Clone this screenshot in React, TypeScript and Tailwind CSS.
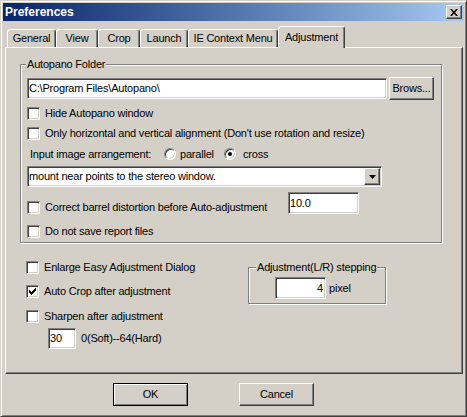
import React from "react";

const sunken =
  "border border-t-[#808080] border-l-[#808080] border-b-white border-r-white shadow-[inset_1px_1px_0_#404040,inset_-1px_-1px_0_#d4d0c8]";
const raised =
  "border border-t-white border-l-white border-b-[#404040] border-r-[#404040] shadow-[inset_-1px_-1px_0_#808080]";
const etched =
  "border border-[#808080] shadow-[1px_1px_0_#fff,inset_1px_1px_0_#fff]";

function Check({ checked }: { checked?: boolean }) {
  return (
    <div className={`w-[13px] h-[13px] bg-white shrink-0 flex items-center justify-center ${sunken}`}>
      {checked && (
        <svg width="7" height="7" viewBox="0 0 7 7" shapeRendering="crispEdges">
          <path
            d="M0 2h1v3H0z M1 3h1v3H1z M2 4h1v3H2z M3 3h1v3H3z M4 2h1v3H4z M5 1h1v3H5z M6 0h1v3H6z"
            fill="#000"
          />
        </svg>
      )}
    </div>
  );
}

function CheckRow({
  label,
  checked,
  className = "",
}: {
  label: string;
  checked?: boolean;
  className?: string;
}) {
  return (
    <div className={`flex items-center h-[20px] ${className}`}>
      <Check checked={checked} />
      <span className="ml-[5px] whitespace-nowrap">{label}</span>
    </div>
  );
}

function Radio({ checked }: { checked?: boolean }) {
  return (
    <div className="w-[12px] h-[12px] rounded-full bg-white border border-t-[#808080] border-l-[#808080] border-b-white border-r-white shadow-[inset_1px_1px_0_#404040,inset_-1px_-1px_0_#d4d0c8] flex items-center justify-center shrink-0">
      {checked && <div className="w-[4px] h-[4px] rounded-full bg-black" />}
    </div>
  );
}

function Tab({ label, className }: { label: string; className: string }) {
  return (
    <div
      className={`h-[18px] border-t border-l border-r border-t-white border-l-white border-r-[#404040] rounded-t-[3px] shadow-[inset_-1px_0_0_#808080] flex items-center justify-center whitespace-nowrap ${className}`}
    >
      {label}
    </div>
  );
}

export default function App() {
  return (
    <div className="w-[467px] h-[417px] bg-[#d4d0c8] border border-t-[#d4d0c8] border-l-[#d4d0c8] border-b-[#404040] border-r-[#404040] shadow-[inset_1px_1px_0_#fff,inset_-1px_-1px_0_#808080] p-[2px] flex flex-col text-[11px] leading-[13px] tracking-[-0.2px] text-black font-['Liberation_Sans',Arial,sans-serif] select-none">
      {/* Title bar */}
      <div className="h-[18px] shrink-0 flex items-center bg-linear-to-r from-[#0a246a] to-[#a6caf0] pl-[2px] pr-[2px]">
        <span className="flex-1 text-white font-bold text-[12px] tracking-normal">Preferences</span>
        <div className={`w-[16px] h-[14px] bg-[#d4d0c8] flex items-center justify-center ${raised}`}>
          <svg width="8" height="7" viewBox="0 0 8 7">
            <path d="M0 0h2l2 2.5L6 0h2L5 3.5 8 7H6L4 4.5 2 7H0l3-3.5z" fill="#000" />
          </svg>
        </div>
      </div>

      {/* Tabs */}
      <div className="flex items-end h-[21px] mt-[5px] pl-[4px] shrink-0">
        <Tab label="General" className="w-[49px]" />
        <Tab label="View" className="w-[42px]" />
        <Tab label="Crop" className="w-[42px]" />
        <Tab label="Launch" className="w-[48px]" />
        <Tab label="IE Context Menu" className="w-[90px]" />
        <div className="relative z-10 w-[67px] h-[22px] -mb-[1px] bg-[#d4d0c8] border-t border-l border-r border-t-white border-l-white border-r-[#404040] rounded-t-[3px] shadow-[inset_-1px_0_0_#808080] flex justify-center pt-[4px] whitespace-nowrap">
          Adjustment
        </div>
      </div>

      {/* Panel */}
      <div className="ml-[2px] mr-[1px] h-[327px] shrink-0 border border-t-white border-l-white border-r-[#404040] border-b-[#404040] shadow-[inset_-1px_-1px_0_#808080] pl-[14px] pt-[16px] flex flex-col">
        {/* Autopano Folder group */}
        <div className={`relative w-[422px] h-[179px] pl-[6px] flex flex-col ${etched}`}>
          <span className="absolute -top-[7px] left-[5px] px-[1px] bg-[#d4d0c8] whitespace-nowrap">
            Autopano Folder
          </span>
          <div className="flex items-center h-[23px] mt-[12px]">
            <div className={`w-[360px] h-[21px] bg-white flex items-center pl-[1px] whitespace-nowrap ${sunken}`}>
              C:\Program Files\Autopano\
            </div>
            <div className={`ml-[2px] w-[45px] h-[23px] bg-[#d4d0c8] flex items-center justify-center whitespace-nowrap overflow-hidden ${raised}`}>
              Brows...
            </div>
          </div>
          <CheckRow className="mt-[3px]" label="Hide Autopano window" />
          <CheckRow label="Only horizontal and vertical alignment (Don't use rotation and resize)" />
          <div className="flex items-center h-[20px] mt-[1px]">
            <span className="ml-[3px] w-[134px] whitespace-nowrap">Input image arrangement:</span>
            <Radio />
            <span className="ml-[4px] w-[44px] whitespace-nowrap">parallel</span>
            <Radio checked />
            <span className="ml-[7px] whitespace-nowrap">cross</span>
          </div>
          <div className={`mt-[2px] w-[355px] h-[21px] bg-white flex items-center pl-[1px] pr-[1px] ${sunken}`}>
            <span className="flex-1 whitespace-nowrap">mount near points to the stereo window.</span>
            <div className={`w-[16px] h-[17px] bg-[#d4d0c8] flex items-center justify-center ${raised}`}>
              <svg width="7" height="4" viewBox="0 0 7 4">
                <path d="M0 0h7L3.5 4z" fill="#000" />
              </svg>
            </div>
          </div>
          <div className="flex items-start mt-[5px] h-[25px]">
            <CheckRow className="w-[261px] mt-[5px]" label="Correct barrel distortion before Auto-adjustment" />
            <div className={`w-[71px] h-[22px] bg-white flex items-center pl-[1px] ${sunken}`}>10.0</div>
          </div>
          <CheckRow className="mt-[4px]" label="Do not save report files" />
        </div>

        {/* Lower section */}
        <div className="flex mt-[14px] ml-[6px]">
          <div className="w-[222px] flex flex-col">
            <CheckRow label="Enlarge Easy Adjustment Dialog" />
            <CheckRow className="mt-[4px]" checked label="Auto Crop after adjustment" />
            <CheckRow className="mt-[5px]" label="Sharpen after adjustment" />
            <div className="flex items-center mt-[2px] ml-[22px]">
              <div className={`w-[28px] h-[21px] bg-white flex items-center pl-[1px] ${sunken}`}>30</div>
              <span className="ml-[5px] whitespace-nowrap">0(Soft)--64(Hard)</span>
            </div>
          </div>
          <div className={`relative mt-[10px] w-[138px] h-[37px] pl-[26px] pt-[9px] flex items-start ${etched}`}>
            <span className="absolute -top-[7px] left-[7px] px-[1px] bg-[#d4d0c8] whitespace-nowrap">
              Adjustment(L/R) stepping
            </span>
            <div className={`w-[51px] h-[22px] bg-white flex items-center justify-end pr-[2px] ${sunken}`}>4</div>
            <span className="ml-[3px] leading-[22px] whitespace-nowrap">pixel</span>
          </div>
        </div>
      </div>

      {/* Buttons */}
      <div className="flex mt-[9px] ml-[110px]">
        <div className="w-[75px] h-[23px] border border-black shadow-[inset_1px_1px_0_#fff,inset_-1px_-1px_0_#808080] flex items-center justify-center">
          OK
        </div>
        <div className={`ml-[51px] w-[75px] h-[23px] flex items-center justify-center ${raised}`}>Cancel</div>
      </div>
    </div>
  );
}
